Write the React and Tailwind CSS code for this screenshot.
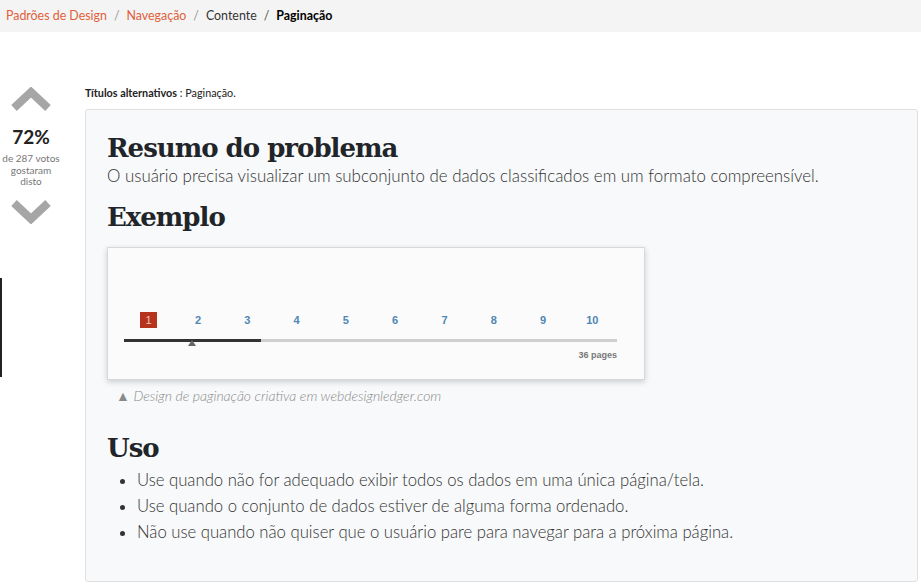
const pages = [1, 2, 3, 4, 5, 6, 7, 8, 9, 10];

const uses = [
  "Use quando não for adequado exibir todos os dados em uma única página/tela.",
  "Use quando o conjunto de dados estiver de alguma forma ordenado.",
  "Não use quando não quiser que o usuário pare para navegar para a próxima página.",
];

const Chevron = ({ down }) => (
  <svg width="40" height="26" viewBox="0 0 40 26" className="mx-auto block">
    <polyline
      points={down ? "3,5 20,21 37,5" : "3,21 20,5 37,21"}
      fill="none"
      stroke="#a6a6a6"
      strokeWidth="8"
    />
  </svg>
);

const App = () => {
  return (
    <div className="min-h-[585px] bg-white text-[#333] font-['Lato','Liberation_Sans',sans-serif]">
      <nav className="h-[32px] bg-[#f4f4f4] flex items-center pl-[6px] text-[12.4px]">
        <span className="text-[#e0603a]">Padrões de Design</span>
        <span className="text-[#999] px-[7px]">/</span>
        <span className="text-[#e0603a]">Navegação</span>
        <span className="text-[#999] px-[7px]">/</span>
        <span className="text-[#333]">Contente</span>
        <span className="text-[#555] px-[7px]">/</span>
        <span className="font-bold text-black">Paginação</span>
      </nav>

      <div className="flex mt-[55px]">
        <aside className="w-[62px] shrink-0 flex flex-col items-center">
          <Chevron />
          <div className="mt-[13px] text-[19px] font-bold text-[#222] leading-[22px]">72%</div>
          <div className="text-[10px] text-[#777] leading-[11.5px] text-center mt-[5px]">
            de 287 votos
            <br />
            gostaram
            <br />
            disto
          </div>
          <div className="mt-[10px]">
            <Chevron down />
          </div>
          <div className="self-start w-[2px] h-[99px] bg-[#222] mt-[54px]" />
        </aside>

        <main className="flex-1 ml-[23px] mr-[3px]">
          <p className="text-[10.8px] leading-[12px] text-[#222]">
            <b>Títulos alternativos</b> : Paginação.
          </p>
          <section className="mt-[10px] h-[473px] bg-[#f8f9fa] border border-[#e0e0e0] rounded-[3px] pl-[21px] pt-[21px]">
            <h2 className="font-['DejaVu_Serif',serif] font-bold text-[26px] leading-[34px] text-[#212529] tracking-[-1px]">
              Resumo do problema
            </h2>
            <p className="font-light text-[16.9px] leading-[22px] text-[#333]">
              O usuário precisa visualizar um subconjunto de dados classificados em um formato compreensível.
            </p>
            <h2 className="mt-[13px] font-['DejaVu_Serif',serif] font-bold text-[26px] leading-[34px] text-[#212529] tracking-[-1px]">
              Exemplo
            </h2>

            <div className="mt-[13px] w-[538px] h-[133px] bg-[#fbfbfb] border border-[#d8d8d8] shadow-[0_2px_6px_rgba(0,0,0,0.18)] pl-[16px] pt-[64px] font-['Liberation_Sans',sans-serif]">
              <div className="w-[493px] grid grid-cols-10 text-[11px] font-bold text-[#4f86b3]">
                {pages.map((p) => (
                  <div key={p} className="flex justify-center">
                    {p === 1 ? (
                      <span className="w-[17px] h-[16px] bg-[#b6341d] text-[#f4c3b7] font-normal flex items-center justify-center">
                        1
                      </span>
                    ) : (
                      <span className="h-[16px] flex items-center">{p}</span>
                    )}
                  </div>
                ))}
              </div>
              <div className="relative w-[493px] h-[3px] mt-[11px] bg-[#cfcfcf]">
                <div className="w-[137px] h-[3px] bg-[#333]" />
                <div className="absolute left-[64px] top-[1px] w-0 h-0 border-l-[4px] border-r-[4px] border-b-[6px] border-l-transparent border-r-transparent border-b-[#666]" />
              </div>
              <div className="w-[493px] text-right text-[9px] font-bold text-[#777] mt-[7px]">36 pages</div>
            </div>

            <p className="mt-[5px] ml-[9px] text-[14px] italic font-light text-[#8a8a8a]">
              ▲ Design de paginação criativa em webdesignledger.com
            </p>

            <h2 className="mt-[25px] font-['DejaVu_Serif',serif] font-bold text-[26px] leading-[34px] text-[#212529] tracking-[-1px]">
              Uso
            </h2>
            <ul className="mt-[2px] list-disc pl-[30px] font-light text-[16.7px] leading-[26px] text-[#333]">
              {uses.map((u) => (
                <li key={u}>{u}</li>
              ))}
            </ul>
          </section>
        </main>
      </div>
    </div>
  );
};

export default App;
